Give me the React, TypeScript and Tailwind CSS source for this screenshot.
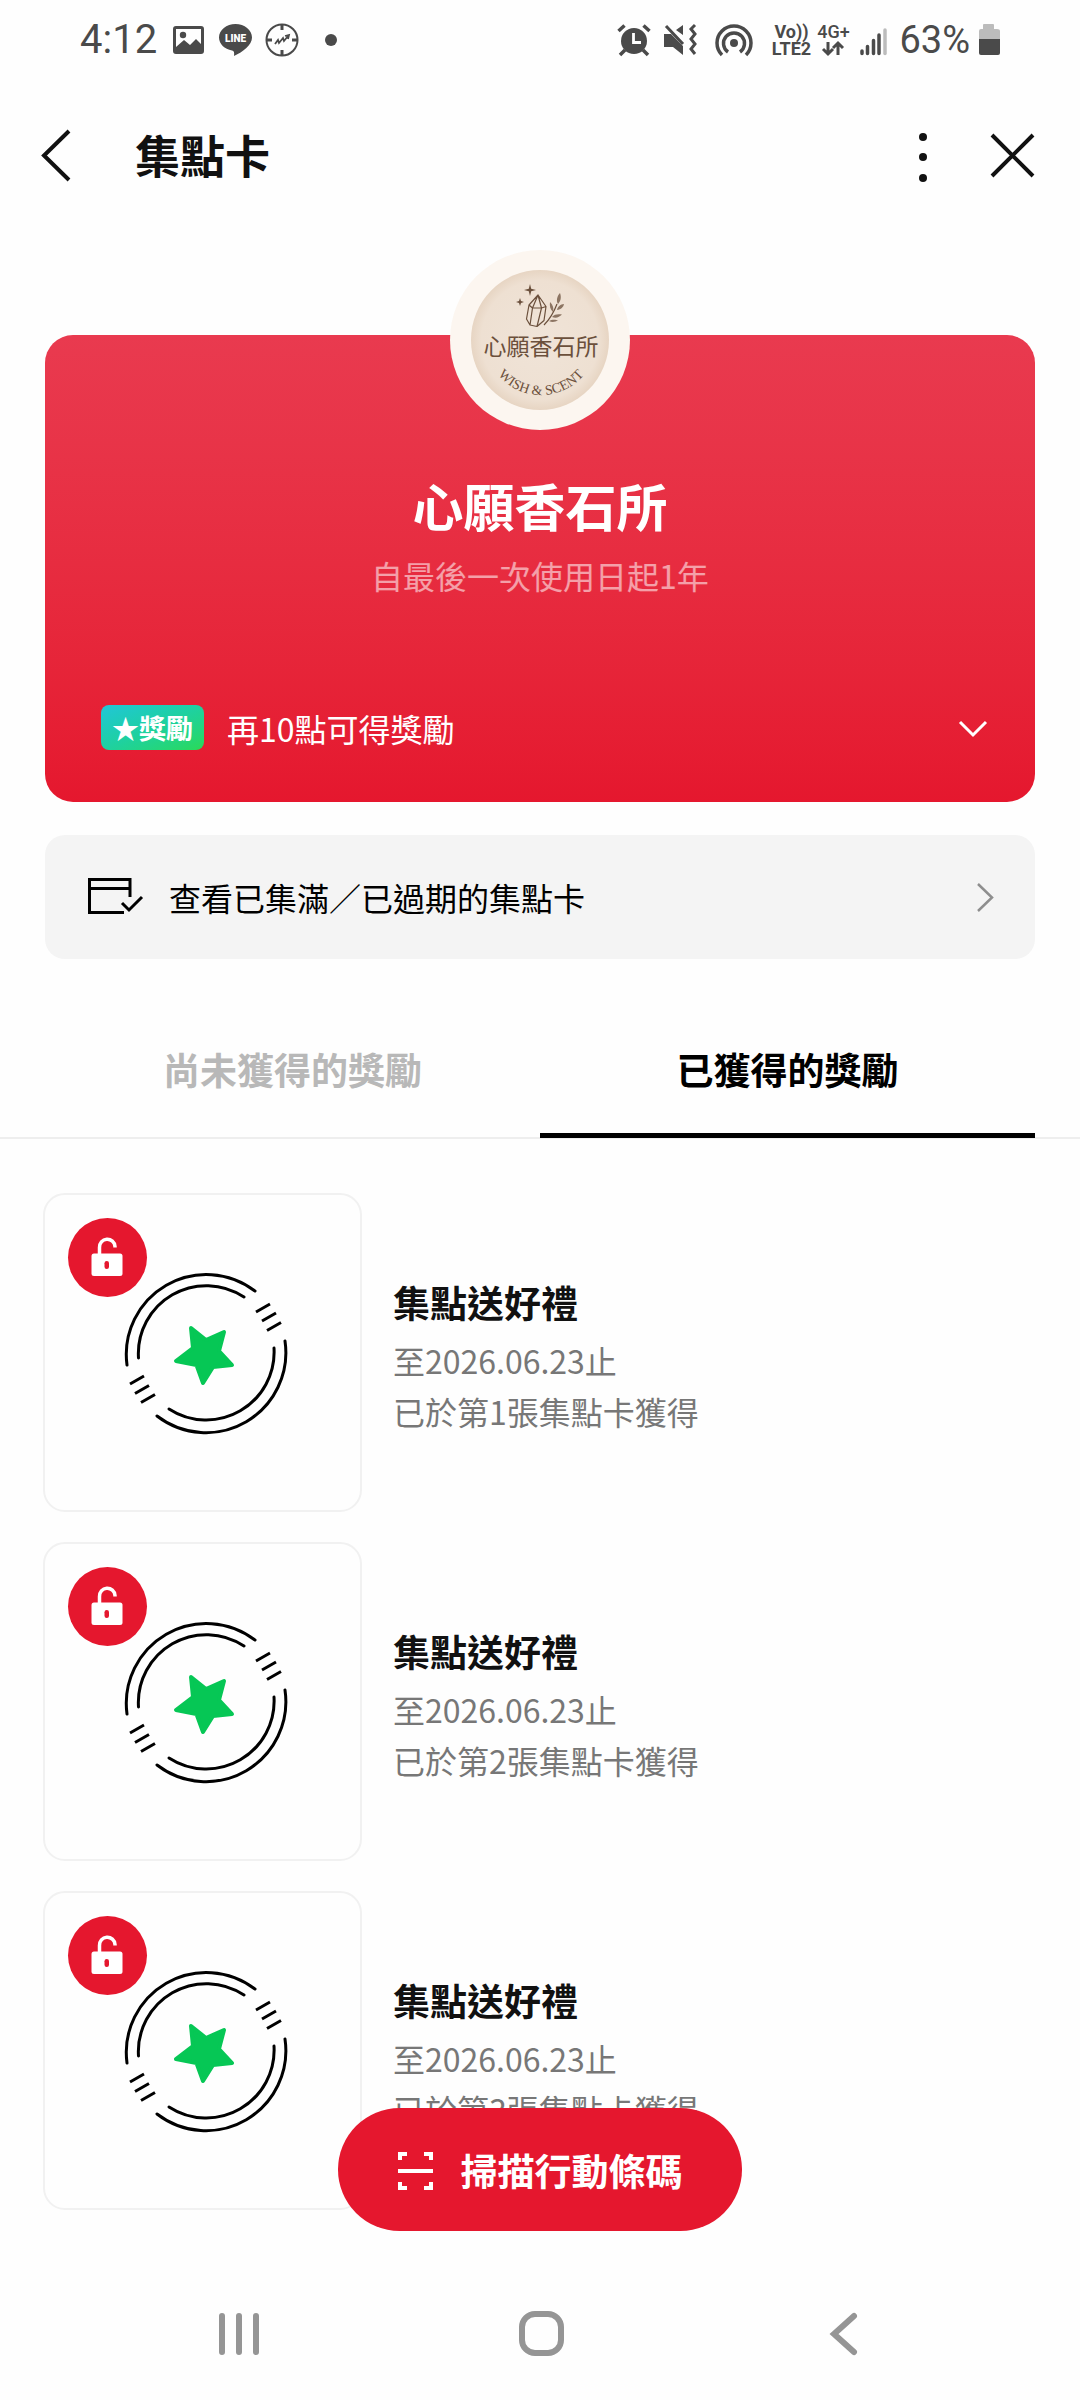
import * as React from 'react'

interface IReward {
    id: number
    title: string
    expired: string
    source: string
}

const rewards: IReward[] = [
    { id: 1, title: '集點送好禮', expired: '至2026.06.23止', source: '已於第1張集點卡獲得' },
    { id: 2, title: '集點送好禮', expired: '至2026.06.23止', source: '已於第2張集點卡獲得' },
    { id: 3, title: '集點送好禮', expired: '至2026.06.23止', source: '已於第3張集點卡獲得' },
]

const StatusBar: React.FunctionComponent = () => {
    return (
        <div className="flex h-20 items-center justify-between pl-20 pr-20 text-[#4a4a4a] font-[Roboto,sans-serif]">
            <div className="flex items-center">
                <span className="text-[40px] leading-[48px]">4:12</span>
                <svg className="ml-4 h-[34px] w-[128px] shrink-0" viewBox="0 0 128 34" fill="none">
                    {/* Gallery */}
                    <path fill="currentColor" fillRule="evenodd" d="M3 3h25q3 0 3 3v22q0 3-3 3H3q-3 0-3-3V6q0-3 3-3Zm0 3v18l8-7 6 5 6-6 5 5V6Z" />
                    <circle cx="10" cy="12" r="3.2" fill="currentColor" />
                    {/* Line */}
                    <path fill="currentColor" d="M62.500 1C53.500 1 46 7 46 14.500c0 6.500 5.500 11.500 13 13 2 .5 2.500 1.500 2 5.500C70 29 79 22 79 14.500 79 7 71.500 1 62.500 1Z" />
                    <text x="62.500" y="19" fill="#fff" fontSize="10" fontWeight="900" textAnchor="middle">LINE</text>
                    {/* Target */}
                    <circle cx="109" cy="17" r="15.500" stroke="currentColor" strokeWidth="2" />
                    <path stroke="currentColor" strokeWidth="3" d="M109 1v6M109 27v6M93 17h6M119 17h6" />
                    <path stroke="currentColor" strokeWidth="1.800" d="m102 21 3-4 1 3 4-5 1 3 4-5m-3 0 4-1-1 4" />
                </svg>
                <span className="ml-6 h-3 w-3 rounded-full bg-[#4a4a4a]" />
            </div>
            <div className="flex items-center">
                <svg className="h-[34px] w-[138px] shrink-0" viewBox="0 0 138 34" fill="none">
                    {/* Alarm */}
                    <circle cx="19" cy="18" r="13" fill="currentColor" />
                    <path stroke="currentColor" strokeWidth="3.500" d="m3.500 8 6-5.500M28.500 2.500l6 5.500M10 27l-5 5M28 27l5 5" />
                    <path stroke="#fff" strokeWidth="2.800" d="M18.500 10v9.500H26" />
                    {/* Mute */}
                    <path fill="currentColor" d="M49 11h7l12 12v9l-10-8h-9ZM68 2v10l-7-5Z" />
                    <path stroke="currentColor" strokeWidth="3" d="m51 3 17 18M80 2l-4 4 4 5-4 5 4 5-4 5 4 5" />
                    {/* Hotspot */}
                    <circle cx="119" cy="20" r="4" fill="currentColor" />
                    <path stroke="currentColor" strokeWidth="3.500" d="M113 29a10.500 10.500 0 1 1 12 0M107 32a17 17 0 1 1 24 0" />
                </svg>
                <div className="ml-4 flex w-11 flex-col items-center text-[18px] font-bold leading-[17px]">
                    <span>Vo))</span>
                    <span>LTE2</span>
                </div>
                <div className="ml-1 flex w-8 flex-col items-center text-[18px] font-medium leading-[17px]">
                    <span>4G+</span>
                    <svg className="h-[17px] w-6" viewBox="0 0 24 17" fill="none" stroke="currentColor" strokeWidth="3">
                        <path d="M7 2v12M2 9l5 5 5-5M17 15V3M12 8l5-5 5 5" />
                    </svg>
                </div>
                <svg className="ml-2.5 h-[34px] w-7" viewBox="0 0 28 34" fill="none" stroke="currentColor" strokeWidth="3.500" strokeLinecap="round">
                    <path d="M3 28v2.500M8.500 23.500v7M14.500 17.500v13M20 12v18.500" />
                    <path stroke="#bcbcbc" d="M26 7v23.500" />
                </svg>
                <span className="ml-3 text-[38px] leading-[48px]">63%</span>
                <svg className="ml-2 h-[34px] w-[22px]" viewBox="0 0 22 34">
                    <path fill="#bcbcbc" d="M6 1h9q1 0 1 1v4h3q3 0 3 2v10H1V8q0-2 2-2h2V2q0-1 1-1Z" />
                    <path fill="currentColor" d="M1 16h21v14q0 2-2 2H3q-2 0-2-2Z" />
                </svg>
            </div>
        </div>
    )
}

const Header: React.FunctionComponent = () => {
    return (
        <header className="flex h-[150px] items-center justify-between pl-7 pr-[34px] text-[#111111]">
            <div className="flex items-center gap-[51px]">
                <button type="button" aria-label="返回">
                    <svg className="h-[60px] w-[56px]" viewBox="0 0 56 60" fill="none" stroke="currentColor" strokeWidth="4">
                        <path d="M41 6 16 30.500 41 55" />
                    </svg>
                </button>
                <h1 className="text-[45px] font-bold leading-[60px]">集點卡</h1>
            </div>
            <div className="flex items-center gap-[37px]">
                <button type="button" aria-label="更多">
                    <svg className="h-[60px] w-10" viewBox="0 0 40 60" fill="currentColor">
                        <circle cx="20" cy="12" r="4" />
                        <circle cx="20" cy="32" r="4" />
                        <circle cx="20" cy="53" r="4" />
                    </svg>
                </button>
                <button type="button" aria-label="關閉">
                    <svg className="h-[60px] w-[66px]" viewBox="0 0 66 60" fill="none" stroke="currentColor" strokeWidth="4">
                        <path d="m12 10 41 41M53 10 12 51" />
                    </svg>
                </button>
            </div>
        </header>
    )
}

const ShopLogo: React.FunctionComponent = () => {
    return (
        <svg className="h-[180px] w-[180px]" viewBox="0 0 180 180" fill="none">
            <defs>
                <radialGradient id="paper">
                    <stop offset="0%" stopColor="#f0e4d8" />
                    <stop offset="85%" stopColor="#eee0d2" />
                    <stop offset="100%" stopColor="#e7d5c3" />
                </radialGradient>
                <path id="motto" d="M35 89a56 56 0 0 0 112 0" />
            </defs>
            <circle cx="90" cy="90" r="90" fill="#fcf6f0" />
            <ellipse cx="90" cy="90" rx="69" ry="70" fill="url(#paper)" />
            <g stroke="#6b503c" strokeWidth="1.200" strokeLinejoin="round">
                <path d="m88 45-9 10-2.500 14L80 75l7 1.500 7-6 2-14ZM88 45l-5.500 13L80 75M88 45l3.500 13L87 76.500M79 55l3.500 3h9l4.500-1.500" />
                <path d="M94 75c6-6 10-13 13-21" />
            </g>
            <g fill="#6b503c">
                <path d="m80 34 1.200 4.800L86 40l-4.800 1.200L80 46l-1.200-4.800L74 40l4.800-1.200ZM70 48l1 3 3 1-3 1-1 3-1-3-3-1 3-1Z" />
                <path fillOpacity=".75" d="M108 54c-2-3-1-8 2-11 1.500 4 1 8-2 11ZM103 62c-3-3-3.500-6-3-10 3 3 4 6 3 10ZM107 60c1-4 3.500-5.500 7-6-.5 3-3 5.500-7 6ZM102 67c2.500-3 6-3 10-2.500-3 3-6 4-10 2.500ZM99 71c3-2 7-1.500 9-.5-3 1.500-6 2-9 .5Z" />
                <text x="91" y="105" fontSize="23" textAnchor="middle" className="font-['Noto_Sans_CJK_TC',sans-serif]">心願香石所</text>
                <text fontSize="14" textAnchor="middle" className="font-['Liberation_Serif',serif]">
                    <textPath href="#motto" startOffset="50%">WISH &amp; SCENT</textPath>
                </text>
            </g>
        </svg>
    )
}

const PointCard: React.FunctionComponent = () => {
    return (
        <section className="mx-[45px] mt-[105px] flex flex-col items-center rounded-[28px] bg-gradient-to-b from-[#e93a4f] to-[#e5172e] px-14 pb-[52px] text-white">
            <div className="-mt-[85px]">
                <ShopLogo />
            </div>
            <h2 className="mt-[45px] text-[51px] font-bold leading-[60px]">心願香石所</h2>
            <p className="mt-5 text-[32px] leading-10 text-white/55">自最後一次使用日起1年</p>
            <button type="button" className="mt-[110px] flex h-[45px] w-full items-center">
                <span className="flex h-[45px] w-[103px] items-center justify-center rounded-lg bg-gradient-to-br from-[#23c5d8] to-[#2bd955] pt-0.5 text-[27px] font-bold">★獎勵</span>
                <span className="ml-[23px] text-[32px] leading-[44px]">再10點可得獎勵</span>
                <svg className="ml-auto mr-[-13px] h-10 w-10" viewBox="0 0 40 40" fill="none" stroke="currentColor" strokeWidth="3">
                    <path d="m8 14 13 13 13-13" />
                </svg>
            </button>
        </section>
    )
}

const HistoryLink: React.FunctionComponent = () => {
    return (
        <a href="#history" className="mx-[45px] mt-[33px] flex h-[124px] items-center rounded-[20px] bg-[#f4f4f4] pl-[42px] pr-10 text-black">
            <svg className="h-10 w-[58px]" viewBox="0 0 58 40" fill="none" stroke="currentColor" strokeWidth="3">
                <path d="M43 20V2.500H2.500v33H37M2.500 11.500H43" />
                <path d="m35 26 7 7 13-13" />
            </svg>
            <span className="ml-6 text-[32px]">查看已集滿／已過期的集點卡</span>
            <svg className="ml-auto h-10 w-5 text-[#8e8e8e]" viewBox="0 0 20 40" fill="none" stroke="currentColor" strokeWidth="2.500">
                <path d="m3 7 14 13.500L3 34" />
            </svg>
        </a>
    )
}

const RewardImage: React.FunctionComponent = () => {
    return (
        <div className="relative h-[319px] w-[319px] shrink-0 rounded-[22px] border-2 border-[#f1f1f1]">
            <svg className="h-full w-full" viewBox="-1 1 315 315" fill="none">
                <g stroke="#000" strokeWidth="3" strokeLinecap="round">
                    <path d="M209 97A80 80 0 0 0 81 171M198 103A68 68 0 0 0 92.500 164" />
                    <path d="M239 147A80 80 0 0 1 111 222M228 154A68 68 0 0 1 123 215" />
                    <path strokeLinecap="butt" d="m210 118 14-8M216 127l14-8M221 136.500l14-8M84 190l14-8M89 199.500l14-8M95 208.500l14-8" />
                </g>
                <path fill="#06c755" stroke="#06c755" strokeWidth="4" strokeLinejoin="round" d="m145 134 15 12 18-8-5 19 13 14-19 2-10 16-6.500-18-20.500-4 17-13Z" />
            </svg>
            <span className="absolute left-[23px] top-[23px] h-[79px] w-[79px] rounded-full bg-[#e5172e]">
                <svg className="h-full w-full" viewBox="0 0 79 79" fill="none">
                    <rect x="23.500" y="35.500" width="31" height="22.500" rx="2.500" fill="#fff" />
                    <path stroke="#fff" strokeWidth="3.500" d="M31.500 36v-6.500a7.500 7.500 0 0 1 15.500-1v1" />
                    <rect x="36.500" y="43" width="4.500" height="8" rx="2.200" fill="#e5172e" />
                </svg>
            </span>
        </div>
    )
}

const RewardItem: React.FunctionComponent<{ reward: IReward }> = ({ reward }) => {
    return (
        <li className="flex gap-[31px]">
            <RewardImage />
            <div className="pt-[84px]">
                <h3 className="text-[37px] font-bold leading-[50px] text-[#111111]">{reward.title}</h3>
                <p className="mt-2 text-[32px] leading-[51px] text-[#777777]">{reward.expired}</p>
                <p className="text-[32px] leading-[51px] text-[#777777]">{reward.source}</p>
            </div>
        </li>
    )
}

const Footer: React.FunctionComponent = () => {
    return (
        <footer className="sticky bottom-0 mt-auto bg-[#fefefe]">
            <button type="button" className="absolute bottom-full left-1/2 mb-[37px] flex h-[123px] w-[404px] -translate-x-1/2 items-center justify-center gap-7 rounded-full bg-[#e5172e] pt-0.5 text-[37px] font-bold text-white">
                <svg className="h-[38px] w-[35px]" viewBox="0 0 35 38" fill="none" stroke="currentColor" strokeWidth="4">
                    <path d="M2 8V2h7M26 2h7v6M2 30v6h7M26 36h7v-6M0 19h35" />
                </svg>
                掃描行動條碼
            </button>
            <nav className="flex h-[132px] items-center justify-around pl-[89px] pr-[87px] text-[#959595]">
                <button type="button" aria-label="最近使用">
                    <svg className="h-12 w-12" viewBox="0 0 48 48" fill="none" stroke="currentColor" strokeWidth="6" strokeLinecap="round">
                        <path d="M6 6v36M23 6v36M40 6v36" />
                    </svg>
                </button>
                <button type="button" aria-label="主畫面">
                    <svg className="h-12 w-12" viewBox="0 0 48 48" fill="none" stroke="currentColor" strokeWidth="6">
                        <rect x="5" y="4" width="39" height="39" rx="13" />
                    </svg>
                </button>
                <button type="button" aria-label="上一頁">
                    <svg className="h-12 w-12" viewBox="0 0 48 48" fill="none" stroke="currentColor" strokeWidth="6" strokeLinecap="round">
                        <path d="M36 6 16 24l20 18" />
                    </svg>
                </button>
            </nav>
        </footer>
    )
}

const App: React.FunctionComponent = () => {
    // For state management
    const [tab, setTab] = React.useState<'locked' | 'owned'>('owned')

    return (
        <div className="flex min-h-screen flex-col bg-[#fefefe] font-['Noto_Sans_CJK_TC',sans-serif]">
            <StatusBar />
            <Header />
            <main>
                <PointCard />
                <HistoryLink />
                <div role="tablist" className="mt-11 flex h-[136px] border-b-2 border-[#eeeeee] px-[45px] text-[37px] font-bold">
                    <button type="button" role="tab" aria-selected={tab === 'locked'} onClick={() => setTab('locked')}
                        className={`-mb-px flex-1 border-b-[5px] pt-1 ${tab === 'locked' ? 'border-black text-black' : 'border-transparent text-[#b8b8b8]'}`}>
                        尚未獲得的獎勵
                    </button>
                    <button type="button" role="tab" aria-selected={tab === 'owned'} onClick={() => setTab('owned')}
                        className={`-mb-px flex-1 border-b-[5px] pt-1 ${tab === 'owned' ? 'border-black text-black' : 'border-transparent text-[#b8b8b8]'}`}>
                        已獲得的獎勵
                    </button>
                </div>
                <ul className="flex flex-col gap-[30px] px-[43px] pt-[54px]">
                    { rewards.map((reward) => <RewardItem key={reward.id} reward={reward} />) }
                </ul>
            </main>
            <Footer />
        </div>
    )
}

export default App
